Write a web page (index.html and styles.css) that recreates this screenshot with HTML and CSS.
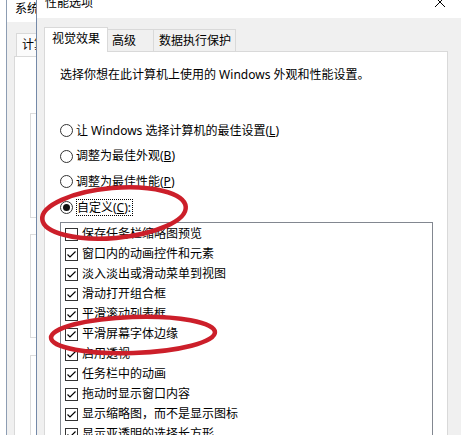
FILE: index.html
```html
<!DOCTYPE html>
<html lang="zh-CN">
<head>
<meta charset="utf-8">
<title>性能选项</title>
<link rel="stylesheet" href="styles.css">
</head>
<body>
<div class="screen">
  <div class="bgwin">
    <div class="bgframe">
      <div class="bg-title">系统</div>
      <div class="bg-body">
        <div class="bg-tab">计算</div>
        <div class="bg-panel">
          <div class="bg-group g1"></div>
          <div class="bg-group g2"></div>
          <div class="bg-group g3"></div>
        </div>
      </div>
    </div>
  </div>
  <div class="dialog">
    <div class="titlebar">
      <span class="title">性能选项</span>
      <svg class="close" width="12" height="12" viewBox="0 0 12 12"><path d="M1 1 L11 11 M11 1 L1 11" stroke="#000" stroke-width="1" fill="none"/></svg>
    </div>
    <div class="dlg-body">
      <div class="tabs">
        <div class="tab active">视觉效果</div>
        <div class="tab wide">高级</div>
        <div class="tab">数据执行保护</div>
      </div>
      <div class="panel">
        <p class="desc">选择你想在此计算机上使用的 Windows 外观和性能设置。</p>
        <div class="radios">
          <div class="opt"><span class="radio"></span><span>让 Windows 选择计算机的最佳设置(<u>L</u>)</span></div>
          <div class="opt"><span class="radio"></span><span>调整为最佳外观(<u>B</u>)</span></div>
          <div class="opt"><span class="radio"></span><span>调整为最佳性能(<u>P</u>)</span></div>
          <div class="opt"><span class="radio"><span class="dot"></span></span><span class="focus">自定义(<u>C</u>):</span></div>
        </div>
        <div class="listbox">
          <div class="item"><span class="cb"></span><span>保存任务栏缩略图预览</span></div>
          <div class="item"><span class="cb"><svg class="chk" width="11" height="11" viewBox="0 0 11 11"><path d="M1.5 5.5 L4 8 L9.5 2.5"/></svg></span><span>窗口内的动画控件和元素</span></div>
          <div class="item"><span class="cb"><svg class="chk" width="11" height="11" viewBox="0 0 11 11"><path d="M1.5 5.5 L4 8 L9.5 2.5"/></svg></span><span>淡入淡出或滑动菜单到视图</span></div>
          <div class="item"><span class="cb"><svg class="chk" width="11" height="11" viewBox="0 0 11 11"><path d="M1.5 5.5 L4 8 L9.5 2.5"/></svg></span><span>滑动打开组合框</span></div>
          <div class="item"><span class="cb"><svg class="chk" width="11" height="11" viewBox="0 0 11 11"><path d="M1.5 5.5 L4 8 L9.5 2.5"/></svg></span><span>平滑滚动列表框</span></div>
          <div class="item"><span class="cb"><svg class="chk" width="11" height="11" viewBox="0 0 11 11"><path d="M1.5 5.5 L4 8 L9.5 2.5"/></svg></span><span>平滑屏幕字体边缘</span></div>
          <div class="item"><span class="cb"><svg class="chk" width="11" height="11" viewBox="0 0 11 11"><path d="M1.5 5.5 L4 8 L9.5 2.5"/></svg></span><span>启用透视</span></div>
          <div class="item"><span class="cb"><svg class="chk" width="11" height="11" viewBox="0 0 11 11"><path d="M1.5 5.5 L4 8 L9.5 2.5"/></svg></span><span>任务栏中的动画</span></div>
          <div class="item"><span class="cb"><svg class="chk" width="11" height="11" viewBox="0 0 11 11"><path d="M1.5 5.5 L4 8 L9.5 2.5"/></svg></span><span>拖动时显示窗口内容</span></div>
          <div class="item"><span class="cb"><svg class="chk" width="11" height="11" viewBox="0 0 11 11"><path d="M1.5 5.5 L4 8 L9.5 2.5"/></svg></span><span>显示缩略图，而不是显示图标</span></div>
          <div class="item"><span class="cb"><svg class="chk" width="11" height="11" viewBox="0 0 11 11"><path d="M1.5 5.5 L4 8 L9.5 2.5"/></svg></span><span>显示亚透明的选择长方形</span></div>
          <div class="item"><span class="cb"><svg class="chk" width="11" height="11" viewBox="0 0 11 11"><path d="M1.5 5.5 L4 8 L9.5 2.5"/></svg></span><span>在窗口下显示阴影</span></div>
        </div>
      </div>
    </div>
  </div>
  <svg class="marks" width="461" height="435" viewBox="0 0 461 435">
    <ellipse cx="114" cy="213" rx="72" ry="25" transform="rotate(-5 114 213)"/>
    <ellipse cx="133" cy="335" rx="82" ry="18" transform="rotate(-2 133 335)"/>
  </svg>
</div>
</body>
</html>
```
FILE: styles.css
```css
* { box-sizing: border-box; margin: 0; padding: 0; }
html, body { margin: 0; background: #fff; }
body {
  font-family: "Noto Sans", "Noto Sans CJK SC", sans-serif;
  font-size: 12px;
  color: #000;
}
.screen {
  position: relative;
  width: 461px;
  height: 435px;
  overflow: hidden;
  display: flex;
  background: #fff;
}

/* background window */
.bgwin { width: 36px; flex: none; padding-left: 6px; background: #fff; overflow: hidden; }
.bgframe { border-left: 1px solid #8d9db3; height: 100%; display: flex; flex-direction: column; overflow: hidden; }
.bg-title { height: 22px; flex: none; background: #fff; padding-left: 8px; line-height: 18px; white-space: nowrap; overflow: hidden; }
.bg-body { flex: 1; background: #f0f0f0; padding: 11px 0 0 7px; display: flex; flex-direction: column; overflow: hidden; }
.bg-tab {
  margin-left: 2px; height: 23px; flex: none;
  background: #fbfbfb; border: 1px solid #d9d9d9; border-bottom: none; border-right: none;
  padding-left: 5px; line-height: 21px; white-space: nowrap; overflow: hidden;
}
.bg-panel {
  flex: 1; background: #fff; border: 1px solid #d9d9d9; border-right: none;
  padding: 56px 0 0 15px;
}
.bg-group { border: 1px solid #dcdcdc; border-right: none; }
.g1 { height: 105px; }
.g2 { height: 104px; margin-top: 16px; }
.g3 { height: 200px; margin-top: 17px; }

/* dialog */
.dialog {
  flex: 1; min-width: 0;
  border-left: 1px solid #7489a8;
  background: #f0f0f0;
  display: flex; flex-direction: column;
}
.titlebar {
  height: 18px; flex: none; background: #fff;
  display: flex; align-items: flex-start;
  padding: 0 15px 0 8px;
}
.title { margin-top: -4px; line-height: 13px; white-space: nowrap; }
.close { margin-left: auto; margin-top: -4px; flex: none; }
.dlg-body { flex: 1; padding: 9px 13px 0 7px; display: flex; flex-direction: column; }

.tabs { display: flex; align-items: flex-end; flex: none; height: 24px; }
.tab {
  height: 22px; line-height: 21px;
  border: 1px solid #d9d9d9; border-bottom: none; border-left: none;
  background: #f0f0f0; padding: 0 4px 0 5px; white-space: nowrap;
}
.tab.wide { width: 46px; padding-left: 4px; }
.tab.active {
  height: 25px; line-height: 22px;
  border-left: 1px solid #d9d9d9;
  background: #fff; padding: 0 7px;
  margin-bottom: -1px;
  position: relative; z-index: 1;
}

.panel {
  flex: 1; background: #fff; border: 1px solid #d9d9d9;
  padding: 0 14px 0 15px;
  display: flex; flex-direction: column;
}
.desc { margin-top: 15px; line-height: 16px; white-space: nowrap; }

.radios { margin-top: 35px; }
.opt { display: flex; align-items: center; gap: 3px; height: 25.5px; line-height: 16px; white-space: nowrap; }
.radio {
  width: 13px; height: 13px; flex: none;
  border: 1px solid #333; border-radius: 50%; background: #fff;
  display: flex; align-items: center; justify-content: center;
}
.dot { width: 7px; height: 7px; border-radius: 50%; background: #111; }
.focus { border: 1px dotted #000; line-height: 15px; padding: 0 1px 0 0; }

.listbox {
  margin-top: 2px; flex: none;
  border: 1px solid #828790; background: #fff;
  padding: 1px 0 0 4px;
}
.item { display: flex; align-items: center; gap: 4px; height: 20px; line-height: 16px; white-space: nowrap; }
.cb {
  width: 13px; height: 13px; flex: none;
  border: 1px solid #333; background: #fff;
  display: flex; align-items: center; justify-content: center;
}
.chk { display: block; }
.chk path { fill: none; stroke: #000; stroke-width: 1.2; }

/* red annotation marks */
.marks { position: absolute; left: 0; top: 0; pointer-events: none; }
.marks ellipse { fill: none; stroke: #cc1f2a; stroke-width: 4.5; }
```
